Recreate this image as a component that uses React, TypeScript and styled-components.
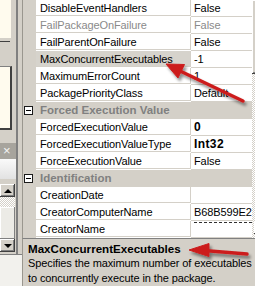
import React from "react";
import styled, { createGlobalStyle, css } from "styled-components";

const GlobalStyle = createGlobalStyle`
  html, body {
    margin: 0;
    padding: 0;
    background: #d4d0c8;
  }
  body {
    font-family: "Liberation Sans", Arial, sans-serif;
  }
`;

type Row =
  | { category: string }
  | {
      name: string;
      value: string;
      muted?: boolean;
      selected?: boolean;
      bold?: boolean;
      dashed?: boolean;
    };

const rows: Row[] = [
  { name: "DisableEventHandlers", value: "False" },
  { name: "FailPackageOnFailure", value: "False", muted: true },
  { name: "FailParentOnFailure", value: "False" },
  { name: "MaxConcurrentExecutables", value: "-1", selected: true },
  { name: "MaximumErrorCount", value: "1" },
  { name: "PackagePriorityClass", value: "Default" },
  { category: "Forced Execution Value" },
  { name: "ForcedExecutionValue", value: "0", bold: true },
  { name: "ForcedExecutionValueType", value: "Int32", bold: true },
  { name: "ForceExecutionValue", value: "False" },
  { category: "Identification" },
  { name: "CreationDate", value: "" },
  { name: "CreatorComputerName", value: "B68B599E2" },
  { name: "CreatorName", value: "", dashed: true },
];

const hatch = css`
  background-color: #d4d0c8;
  background-image: repeating-conic-gradient(#ffffff 0 25%, #d4d0c8 0 50%);
  background-size: 2px 2px;
`;

const raised = css`
  background: #d4d0c8;
  box-shadow: inset -1px -1px #404040, inset 1px 1px #ffffff,
    inset -2px -2px #808080;
`;

const App: React.FC = () => {
  return (
    <>
      <GlobalStyle />
      <Screen>
        <LeftPane>
          <DockTop>
            <CreamStrip />
            <Rule />
            <SunkenBox />
          </DockTop>
          <DockTitle>×</DockTitle>
          <DockHeader />
          <MiniScroll>
            <ScrollButton>
              <Tri $dir="up" />
            </ScrollButton>
            <MiniTrack />
            <MiniThumb />
            <ScrollButton>
              <Tri $dir="down" />
            </ScrollButton>
          </MiniScroll>
          <DockBottom />
        </LeftPane>

        <PropertyGrid>
          <GridArea>
            <Rows>
              {rows.map((r, i) =>
                "category" in r ? (
                  <CategoryRow key={i}>
                    <Margin>
                      <Toggle />
                    </Margin>
                    <CategoryLabel>{r.category}</CategoryLabel>
                  </CategoryRow>
                ) : (
                  <PropRow key={i}>
                    <Margin />
                    <NameCell $selected={r.selected} $muted={r.muted}>
                      {r.name}
                    </NameCell>
                    <ValueCell $muted={r.muted} $bold={r.bold}>
                      {r.dashed ? <DashedMark /> : r.value}
                    </ValueCell>
                  </PropRow>
                )
              )}
            </Rows>
            <VScroll>
              <Thumb />
              <Track />
              <ScrollButton $side>
                <Tri $dir="down" />
              </ScrollButton>
            </VScroll>
          </GridArea>
          <Description>
            <DescTitle>MaxConcurrentExecutables</DescTitle>
            <DescText>
              Specifies the maximum number of executables
              <br />
              to concurrently execute in the package.
            </DescText>
          </Description>
        </PropertyGrid>

        <Annotations viewBox="0 0 255 286" width={255} height={286}>
          <defs>
            <filter id="shadow" x="-20%" y="-20%" width="140%" height="160%">
              <feDropShadow
                dx="2"
                dy="3"
                stdDeviation="1.6"
                floodColor="#000"
                floodOpacity="0.45"
              />
            </filter>
          </defs>
          <g filter="url(#shadow)" fill="#cc1f1f" stroke="#cc1f1f">
            <line
              x1="243"
              y1="101"
              x2="178"
              y2="70"
              strokeWidth="3.5"
              strokeLinecap="round"
            />
            <polygon points="166,64 184.5,64.5 178,78" strokeWidth="1" />
            <line
              x1="247"
              y1="254"
              x2="204"
              y2="250.5"
              strokeWidth="3.5"
              strokeLinecap="round"
            />
            <polygon points="189,250 209,243.5 209,256.5" strokeWidth="1" />
          </g>
        </Annotations>
      </Screen>
    </>
  );
};

const Screen = styled.div`
  position: relative;
  width: 255px;
  height: 286px;
  display: flex;
  overflow: hidden;
  background: #d4d0c8;
  font-size: 11px;
  letter-spacing: -0.1px;
`;

/* left docked window, only its edge is visible */
const LeftPane = styled.div`
  width: 22px;
  flex-shrink: 0;
  display: flex;
  flex-direction: column;
  background: #d4d0c8;
  box-shadow: inset -4px 0 #d4d0c8, inset -6px 0 #808080;
`;

const DockTop = styled.div`
  height: 140px;
  display: flex;
  flex-direction: column;
`;

const CreamStrip = styled.div`
  width: 11px;
  height: 38px;
  background: #fffbee;
`;

const Rule = styled.div`
  width: 10px;
  height: 1px;
  margin-top: 3px;
  background: #404040;
`;

const SunkenBox = styled.div`
  width: 10px;
  height: 61px;
  margin-top: 24px;
  background: #fffbee;
  border-top: 1px solid #808080;
  border-right: 2px solid #404040;
  border-bottom: 2px solid #404040;
`;

const DockTitle = styled.div`
  width: 16px;
  height: 16px;
  margin-top: 3px;
  background: #a7a49d;
  color: #f4f4f4;
  font-size: 13px;
  line-height: 16px;
  padding-left: 3px;
  box-sizing: border-box;
`;

const DockHeader = styled.div`
  width: 16px;
  height: 20px;
  background: linear-gradient(#fafafa, #e2e2e2);
`;

const MiniScroll = styled.div`
  width: 15px;
  margin-top: 5px;
  display: flex;
  flex-direction: column;
`;

const MiniTrack = styled.div`
  height: 10px;
  ${hatch};
`;

const MiniThumb = styled.div`
  height: 32px;
  background: #ecebe6;
  box-shadow: inset -1px -1px #808080, inset 1px 1px #ffffff;
`;

const DockBottom = styled.div`
  flex: 1;
  margin-top: 2px;
  border-top: 1px solid #808080;
  background: #f2f1ed;
`;

const ScrollButton = styled.div<{ $side?: boolean }>`
  height: 13px;
  ${raised};
  display: flex;
  align-items: center;
  justify-content: center;
  ${(p) =>
    p.$side &&
    css`
      width: 13px;
      margin: 0 2px 4px 2px;
    `}
`;

const Tri = styled.span<{ $dir: "up" | "down" }>`
  width: 0;
  height: 0;
  border-left: 4px solid transparent;
  border-right: 4px solid transparent;
  ${(p) =>
    p.$dir === "up"
      ? css`
          border-bottom: 4px solid #000;
        `
      : css`
          border-top: 4px solid #000;
        `}
`;

/* property grid */
const PropertyGrid = styled.div`
  flex: 1;
  display: flex;
  flex-direction: column;
`;

const GridArea = styled.div`
  height: 239px;
  display: flex;
  border-left: 1px solid #9a978f;
`;

const Rows = styled.div`
  flex: 1;
  display: flex;
  flex-direction: column;
  background: #ffffff;
`;

const rowBase = css`
  height: 17px;
  display: flex;
  flex-shrink: 0;
`;

const PropRow = styled.div`
  ${rowBase};
`;

const CategoryRow = styled.div`
  ${rowBase};
  background: #d4d0c8;
`;

const Margin = styled.div`
  width: 13px;
  flex-shrink: 0;
  background: #d4d0c8;
  display: flex;
  align-items: center;
`;

const Toggle = styled.div`
  width: 9px;
  height: 9px;
  margin-left: 1px;
  box-sizing: border-box;
  border: 1px solid #1a1a1a;
  background: #ffffff;
  display: flex;
  align-items: center;
  justify-content: center;

  &::after {
    content: "";
    width: 5px;
    height: 1px;
    background: #000;
  }
`;

const CategoryLabel = styled.div`
  padding-left: 4px;
  font-weight: bold;
  font-size: 11.5px;
  letter-spacing: 0;
  color: #808080;
  line-height: 17px;
  white-space: nowrap;
`;

const NameCell = styled.div<{ $selected?: boolean; $muted?: boolean }>`
  width: 155px;
  flex-shrink: 0;
  height: 16px;
  padding-left: 4px;
  box-sizing: border-box;
  line-height: 16px;
  white-space: nowrap;
  overflow: hidden;
  border-right: 1px solid #d4d0c8;
  border-bottom: 1px solid #d4d0c8;
  color: ${(p) => (p.$muted ? "#8a8a8a" : "#000")};
  background: ${(p) => (p.$selected ? "#d6d3cc" : "#ffffff")};
`;

const ValueCell = styled.div<{ $muted?: boolean; $bold?: boolean }>`
  flex: 1;
  min-width: 0;
  height: 16px;
  padding-left: 3px;
  line-height: 16px;
  white-space: nowrap;
  overflow: hidden;
  border-bottom: 1px solid #d4d0c8;
  color: ${(p) => (p.$muted ? "#8a8a8a" : "#000")};
  ${(p) =>
    p.$bold &&
    css`
      font-weight: bold;
      font-size: 12px;
      letter-spacing: 0.4px;
    `}
`;

const DashedMark = styled.div`
  margin-top: 1px;
  height: 0;
  border-top: 1px dashed #303030;
`;

const VScroll = styled.div`
  width: 17px;
  flex-shrink: 0;
  display: flex;
  flex-direction: column;
  ${hatch};
`;

const Thumb = styled.div`
  height: 74px;
  width: 15px;
  ${raised};
`;

const Track = styled.div`
  flex: 1;
`;

const Description = styled.div`
  flex: 1;
  border-top: 1px solid #808080;
  border-left: 1px solid #9a978f;
  padding: 3px 0 0 5px;
  background: #d4d0c8;
  color: #000;
`;

const DescTitle = styled.div`
  font-weight: bold;
  font-size: 11.6px;
  letter-spacing: 0;
  line-height: 14px;
  white-space: nowrap;
`;

const DescText = styled.div`
  line-height: 15px;
  white-space: nowrap;
`;

const Annotations = styled.svg`
  position: absolute;
  left: 0;
  top: 0;
  pointer-events: none;
`;

export default App;
